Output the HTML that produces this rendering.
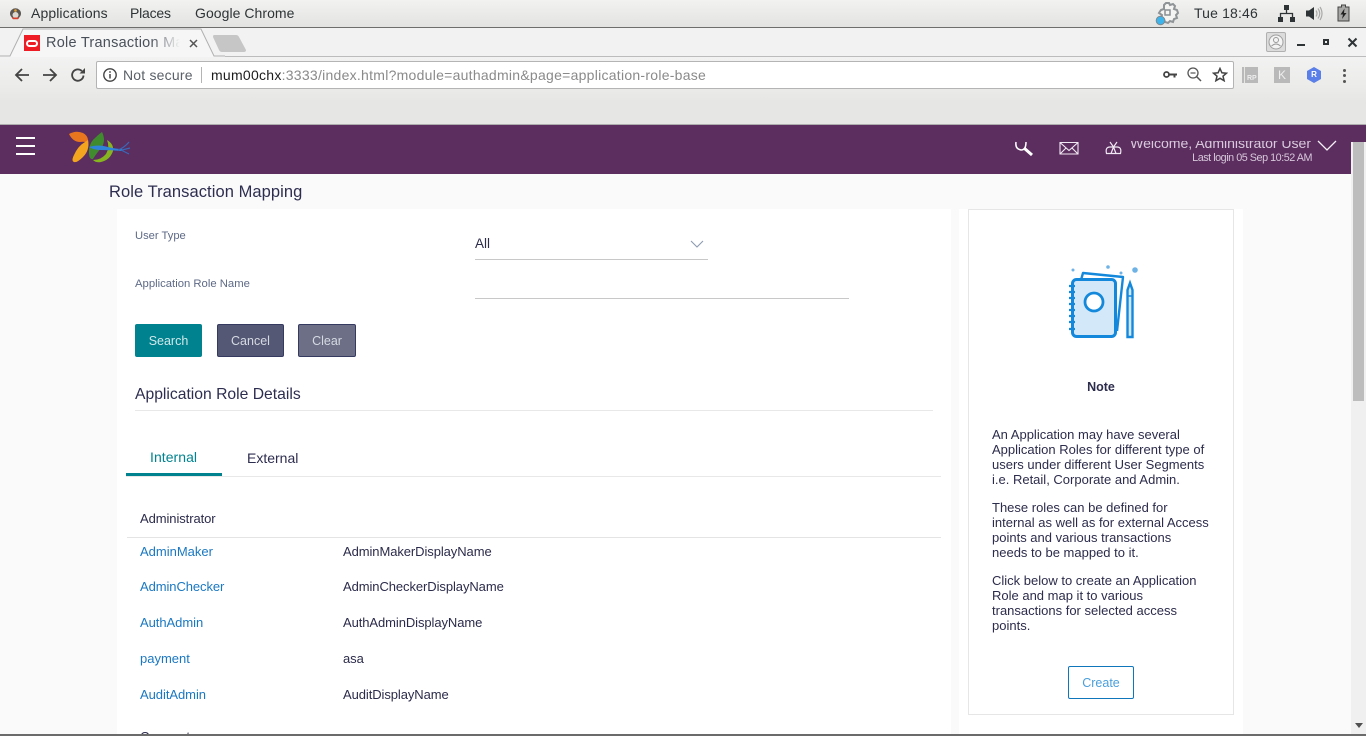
<!DOCTYPE html>
<html><head><meta charset="utf-8"><title>Role Transaction Mapping</title>
<style>
html,body{margin:0;padding:0;width:1366px;height:736px;overflow:hidden;background:#fafafa;font-family:"Liberation Sans",sans-serif;}
#root{position:relative;width:1366px;height:736px;overflow:hidden;background:#fafafa}
.a{position:absolute}
.t{position:absolute;white-space:nowrap;line-height:16px}
.k{color:#2b2b4b;font-size:13px;letter-spacing:-.08px}
.l{color:#1a78c2;font-size:13px}
.n{color:#2c2c4c;font-size:13px;left:992px}
.b{position:absolute;top:324px;height:33px;box-sizing:border-box;border-radius:2px;color:#d5d9e2;font-size:12.5px;line-height:33px;text-align:center}
</style></head><body><div id="root">

<!-- GNOME top bar -->
<div class="a" style="left:0;top:0;width:1366px;height:27px;background:linear-gradient(#f2f2f0,#e3e3e1);border-bottom:1px solid #6e6e6c;box-sizing:content-box"></div>
<svg class="a" style="left:8px;top:5px" width="15" height="16" viewBox="0 0 15 16"><ellipse cx="7.500" cy="8.500" rx="5.500" ry="5.200" fill="#5a5654"/><ellipse cx="7.500" cy="10" rx="3" ry="3" fill="#dcd8d0"/><path d="M3.500 12.500h8l-1.500 1.700h-5z" fill="#d8402e"/><circle cx="7.500" cy="5.500" r="1.300" fill="#e0a030"/></svg>
<div class="t" style="left:31px;top:5px;font-size:14px;color:#2e3436;letter-spacing:.1px">Applications</div>
<div class="t" style="left:130px;top:5px;font-size:14px;color:#2e3436;letter-spacing:-.2px">Places</div>
<div class="t" style="left:195px;top:5px;font-size:14px;color:#2e3436;letter-spacing:.05px">Google Chrome</div>
<svg class="a" style="left:1154px;top:1px" width="26" height="25" viewBox="0 0 26 25"><path d="M10 4l2-2h3l1 2 3-1 2 2-1 3 3 1 1 3-2 2 1 3-3 1-1 3-3-1-2 2-3-1-1-3-3-1 1-3-3-2 2-3 3-1 0-3z" fill="#f4f4f2" stroke="#8f9497" stroke-width="2"/><rect x="11" y="9" width="5" height="5" fill="none" stroke="#8a8f92" stroke-width="1.500"/><circle cx="6.500" cy="19.500" r="4.300" fill="#3db5ec" stroke="#7c8a92"/></svg>
<div class="t" style="left:1194px;top:5px;font-size:14px;color:#2e3436;letter-spacing:.15px">Tue 18:46</div>
<svg class="a" style="left:1278px;top:5px" width="17" height="17" viewBox="0 0 17 17"><path d="M6 0h5v5H6zM0 12h5v5H0zM12 12h5v5h-5z" fill="#2e3436"/><path d="M8.500 5v3.500M2.500 12V8.500h12V12" fill="none" stroke="#2e3436" stroke-width="1.300"/></svg>
<svg class="a" style="left:1306px;top:5px" width="17" height="17" viewBox="0 0 17 17"><path d="M0 5.500h3L8 2v13l-5-3.500H0z" fill="#2e3436"/><path d="M10 5.500q2 3 0 6M12 3.500q3.500 5 0 10M14 2q4 6.500 0 13" fill="none" stroke="#a9a9a9" stroke-width="1.200"/></svg>
<svg class="a" style="left:1337px;top:4px" width="13" height="18" viewBox="0 0 13 18"><path d="M4.500 1h4v2h3.500v14H1V3h3.500z" fill="#a7a7a5" stroke="#444" stroke-width="1"/><path d="M7.500 4.500L3.500 10.500h2.500L5 15l4.500-6H7z" fill="#222"/></svg>

<!-- Chrome tab strip -->
<div class="a" style="left:0;top:28px;width:1366px;height:28px;background:#f2f2f2;border-bottom:1px solid #bcbcbc;box-sizing:content-box"></div>
<svg class="a" style="left:0;top:28px" width="225" height="30" viewBox="0 0 225 30"><path d="M10 28L23 1h178l13 27h11v2H0v-2z" fill="#f6f6f6"/><path d="M0 28H10L23 1h178l13 27h11" fill="none" stroke="#b0b0b0" stroke-width="1"/></svg>
<svg class="a" style="left:212px;top:34px" width="36" height="19" viewBox="0 0 36 19"><path d="M2 1h22q2 0 3 2l7 13q0 2-2 2H10q-2 0-3-2L1 3q0-2 1-2z" fill="#c6c6c6"/></svg>
<div class="a" style="left:24px;top:35px;width:16px;height:16px;background:#ee1c25"></div>
<div class="a" style="left:26px;top:39.500px;width:12px;height:7px;box-sizing:border-box;border:2px solid #fff;border-radius:4px"></div>
<div class="a" style="left:46px;top:35px;width:134px;height:17px;overflow:hidden"><div class="t" style="left:0;top:0;font-size:14.500px;line-height:17px;color:#49505a;letter-spacing:.25px;-webkit-mask-image:linear-gradient(90deg,#000 78%,transparent 100%);mask-image:linear-gradient(90deg,#000 78%,transparent 100%);width:134px;overflow:hidden">Role Transaction Mapping</div></div>
<svg class="a" style="left:189px;top:39px" width="9" height="9" viewBox="0 0 9 9"><path d="M1 1l7 7M8 1L1 8" stroke="#555" stroke-width="1.500"/></svg>
<!-- window controls -->
<div class="a" style="left:1266px;top:32px;width:20px;height:20px;box-sizing:border-box;background:#dcdcdc;border:1px solid #b0b0b0;border-radius:2px"></div>
<svg class="a" style="left:1268px;top:34px" width="16" height="16" viewBox="0 0 16 16"><circle cx="8" cy="8" r="7" fill="#f4f4f4" stroke="#a0a0a0"/><circle cx="8" cy="6" r="2.500" fill="none" stroke="#999"/><path d="M3.500 12q4.500-4 9 0" fill="none" stroke="#999"/></svg>
<div class="a" style="left:1297px;top:44px;width:8px;height:2px;background:#2e3436"></div>
<div class="a" style="left:1323px;top:39px;width:6px;height:6px;box-sizing:border-box;border:2px solid #2e3436"></div>
<svg class="a" style="left:1347px;top:37px" width="11" height="11" viewBox="0 0 11 11"><path d="M1.500 1.500l8 8M9.500 1.500l-8 8" stroke="#2e3436" stroke-width="2"/></svg>

<!-- Toolbar -->
<div class="a" style="left:0;top:57px;width:1366px;height:68px;background:linear-gradient(#f2f2f2 0,#ebebe9 30px,#e6e6e4 45px);border-bottom:1px solid #adadad;box-sizing:border-box"></div>
<svg class="a" style="left:14px;top:67px" width="16" height="16" viewBox="0 0 16 16"><path d="M15 8H2M8 2L2 8l6 6" fill="none" stroke="#444" stroke-width="1.800"/></svg>
<svg class="a" style="left:42px;top:67px" width="16" height="16" viewBox="0 0 16 16"><path d="M1 8h13M8 2l6 6-6 6" fill="none" stroke="#444" stroke-width="1.800"/></svg>
<svg class="a" style="left:70px;top:67px" width="16" height="16" viewBox="0 0 16 16"><path d="M13.500 8.500A5.700 5.700 0 1 1 11.800 4" fill="none" stroke="#444" stroke-width="1.800"/><path d="M9.500 6.500H15V1z" fill="#444"/></svg>
<div class="a" style="left:96px;top:61px;width:1138px;height:28px;box-sizing:border-box;background:#fff;border:1px solid #b4b4b4;border-radius:2px"></div>
<svg class="a" style="left:103px;top:68px" width="14" height="14" viewBox="0 0 14 14"><circle cx="7" cy="7" r="6.200" fill="none" stroke="#444" stroke-width="1.400"/><path d="M7 6v4.500" stroke="#444" stroke-width="1.500"/><path d="M7 3.200v1.600" stroke="#444" stroke-width="1.500"/></svg>
<div class="t" style="left:123px;top:67px;font-size:14px;color:#5a6068;letter-spacing:.2px">Not secure</div>
<div class="a" style="left:201px;top:67px;width:1px;height:16px;background:#b4b4b4"></div>
<div class="t" style="left:211px;top:67px;font-size:14px;color:#8a8a8a;letter-spacing:.265px"><span style="color:#1c1c1c">mum00chx</span>:3333/index.html?module=authadmin&amp;page=application-role-base</div>
<svg class="a" style="left:1163px;top:70px" width="14" height="9" viewBox="0 0 14 9"><circle cx="3.500" cy="4.500" r="2.500" fill="none" stroke="#444" stroke-width="1.800"/><path d="M6 3.500h8v2h-1.500v2h-2v-2H6z" fill="#444"/></svg>
<svg class="a" style="left:1187px;top:67px" width="15" height="15" viewBox="0 0 15 15"><circle cx="6" cy="6" r="5" fill="none" stroke="#555" stroke-width="1.300"/><path d="M9.500 9.500L14 14" stroke="#555" stroke-width="1.500"/><path d="M3.500 6h5" stroke="#555" stroke-width="1.200"/></svg>
<svg class="a" style="left:1212px;top:67px" width="16" height="15" viewBox="0 0 16 15"><path d="M8 1.500l1.900 4.300 4.600.400-3.500 3 1.100 4.500L8 11.300l-4.100 2.400L5 9.200l-3.500-3 4.600-.4z" fill="none" stroke="#444" stroke-width="1.500"/></svg>
<div class="a" style="left:1242px;top:67px;width:16px;height:16px;background:#b9b9b9"></div>
<div class="a" style="left:1244px;top:67px;width:1px;height:16px;background:#e6e6e4"></div>
<div class="t" style="left:1247px;top:75px;font-size:7px;line-height:8px;font-weight:bold;color:#eee">RP</div>
<div class="a" style="left:1274px;top:67px;width:16px;height:16px;background:#b9b9b9;color:#eee;font-size:12px;line-height:16px;text-align:center">K</div>
<svg class="a" style="left:1306px;top:67px" width="16" height="16" viewBox="0 0 16 16"><path d="M8 0l7 4v8l-7 4-7-4V4z" fill="#5b7fe8"/></svg>
<div class="t" style="left:1306px;top:67px;width:16px;text-align:center;font-size:8px;font-weight:bold;color:#fff">R</div>
<div class="a" style="left:1343px;top:69px;width:3px;height:3px;background:#555;border-radius:2px"></div>
<div class="a" style="left:1343px;top:74px;width:3px;height:3px;background:#555;border-radius:2px"></div>
<div class="a" style="left:1343px;top:80px;width:3px;height:3px;background:#555;border-radius:2px"></div>

<!-- App header -->
<div class="a" style="left:0;top:125px;width:1351px;height:49px;background:#5c2d5f"></div>
<div class="a" style="left:1351px;top:125px;width:15px;height:17px;background:#5c2d5f"></div>
<div class="a" style="left:16px;top:137px;width:19px;height:2px;background:#fff"></div>
<div class="a" style="left:16px;top:145px;width:19px;height:2px;background:#fff"></div>
<div class="a" style="left:16px;top:153px;width:19px;height:2px;background:#fff"></div>
<svg class="a" style="left:68px;top:130px" width="64" height="34" viewBox="0 0 64 34">
<path d="M1 4Q8 0 15 3Q21 6 20 14Q18 11 12 12Q5 12 1 4z" fill="#e8761f"/>
<path d="M20 10Q22 20 15 27Q9 33 6 32Q3 31 6 25Q10 16 17 12z" fill="#f4a51f"/>
<path d="M34 2Q38 10 34 17Q28 24 25 29Q21 30 21 22Q21 13 27 8Q31 4 34 2z" fill="#3f8b2e"/>
<path d="M39 10Q46 14 45 21Q42 30 33 32Q28 33 25 30Q33 30 38 24Q42 17 39 10z" fill="#86b51f"/>
<path d="M21 17Q30 14 40 17Q48 19 54 19L54 21Q42 20 33 20Q26 20 21 17z" fill="#2f83d8"/>
<path d="M50 20Q56 18 61 12M53 20l8 4M54 20l8-2" stroke="#3968b8" stroke-width="1.200" fill="none"/>
</svg>
<svg class="a" style="left:1014px;top:140px" width="20" height="17" viewBox="0 0 20 17"><path d="M2 2Q1 9 7 10Q12 10 12 2" fill="none" stroke="#fff" stroke-width="1.500"/><path d="M10 8l8 7" stroke="#fff" stroke-width="3"/></svg>
<svg class="a" style="left:1059px;top:141px" width="20" height="14" viewBox="0 0 20 14"><path d="M1 1.500h18v11.500H1zM1 1.500l9 8 9-8M1 13l6-6M19 13l-6-6" fill="none" stroke="#f0e8f2" stroke-width="1.100"/></svg>
<svg class="a" style="left:1105px;top:141px" width="17" height="14" viewBox="0 0 17 14"><path d="M1.500 12.500Q0 6 5 6h7q5 0 3.500 6.500zM5 1l3.500 5L12 1M8.500 6L6 12.500M8.500 6L11 12.500" fill="none" stroke="#f0e8f2" stroke-width="1.200"/></svg>
<div class="a" style="left:1120px;top:141px;width:200px;height:10px;overflow:hidden">
<div class="t" style="left:0;top:-6px;font-size:14.100px;color:#d8cadc;width:191px;text-align:right;letter-spacing:-.05px">Welcome, Administrator User</div>
</div>
<div class="t" style="left:1120px;top:151px;font-size:10.800px;line-height:14px;color:#d6c8da;width:192px;text-align:right;letter-spacing:-.47px">Last login 05 Sep 10:52 AM</div>
<svg class="a" style="left:1317px;top:140px" width="20" height="12" viewBox="0 0 20 12"><path d="M1 1l9 9 9-9" fill="none" stroke="#f4f0f6" stroke-width="1.300"/></svg>

<!-- Scrollbar -->
<div class="a" style="left:1351px;top:142px;width:15px;height:594px;background:#f0f0f0"></div>
<div class="a" style="left:1353px;top:142px;width:11px;height:259px;background:#bdbdbd"></div>
<svg class="a" style="left:1354px;top:723px" width="10" height="6" viewBox="0 0 10 6"><path d="M1 0h8L5 5z" fill="#505050"/></svg>

<!-- Page content -->
<div class="t" style="left:109px;top:182px;font-size:16.500px;line-height:20px;color:#2d2d50;letter-spacing:.07px">Role Transaction Mapping</div>
<div class="a" style="left:117px;top:209px;width:834px;height:527px;background:#fff"></div>
<div class="a" style="left:959px;top:209px;width:284px;height:527px;background:#fff"></div>

<div class="t" style="left:135px;top:228px;font-size:11.200px;color:#5e6a86">User Type</div>
<div class="t" style="left:135px;top:276px;font-size:11.300px;color:#5e6a86">Application Role Name</div>
<div class="t" style="left:475px;top:236px;font-size:13.500px;color:#2b2b4b">All</div>
<div class="a" style="left:475px;top:259px;width:233px;height:1px;background:#c8c8c8"></div>
<svg class="a" style="left:690px;top:240px" width="14" height="8" viewBox="0 0 14 8"><path d="M1 1l6 6 6-6" fill="none" stroke="#8d9ab0" stroke-width="1.100"/></svg>
<div class="a" style="left:475px;top:298px;width:374px;height:1px;background:#c8c8c8"></div>

<div class="b" style="left:135px;width:67px;background:#00838f;border:1px solid #00838f;color:#cfe8ea">Search</div>
<div class="b" style="left:217px;width:67px;background:#555874;border:1px solid #353a60">Cancel</div>
<div class="b" style="left:298px;width:58px;background:#6c6f85;border:1px solid #353a60">Clear</div>

<div class="t" style="left:135px;top:385px;font-size:15.700px;line-height:20px;color:#2d2d50">Application Role Details</div>
<div class="a" style="left:135px;top:410px;width:798px;height:1px;background:#e8e8e8"></div>

<div class="t" style="left:150px;top:449px;font-size:14px;color:#00838f;letter-spacing:.05px">Internal</div>
<div class="t" style="left:247px;top:450px;font-size:14px;color:#2d2d50">External</div>
<div class="a" style="left:126px;top:476px;width:815px;height:1px;background:#e8e8e8"></div>
<div class="a" style="left:126px;top:473px;width:96px;height:3px;background:#00838f"></div>

<div class="t k" style="left:140px;top:511px">Administrator</div>
<div class="a" style="left:127px;top:537px;width:814px;height:1px;background:#e4e4e4"></div>

<div class="t l" style="left:140px;top:544px">AdminMaker</div>
<div class="t k" style="left:343px;top:544px">AdminMakerDisplayName</div>
<div class="t l" style="left:140px;top:579px;letter-spacing:-.08px">AdminChecker</div>
<div class="t k" style="left:343px;top:579px">AdminCheckerDisplayName</div>
<div class="t l" style="left:140px;top:615px;letter-spacing:-.05px">AuthAdmin</div>
<div class="t k" style="left:343px;top:615px">AuthAdminDisplayName</div>
<div class="t l" style="left:140px;top:651px">payment</div>
<div class="t k" style="left:343px;top:651px">asa</div>
<div class="t l" style="left:140px;top:687px;letter-spacing:-.05px">AuditAdmin</div>
<div class="t k" style="left:343px;top:687px">AuditDisplayName</div>
<div class="t k" style="left:140px;top:729px">Corporate</div>

<!-- Note card -->
<div class="a" style="left:968px;top:209px;width:266px;height:506px;box-sizing:border-box;border:1px solid #e6e6e6;background:#fff"></div>
<svg class="a" style="left:1060px;top:260px" width="85" height="85" viewBox="0 0 85 85">
<circle cx="13" cy="10" r="1.500" fill="#6fb2e6"/><circle cx="48" cy="7" r="1.800" fill="#6fb2e6"/><circle cx="61" cy="13" r="1.500" fill="#6fb2e6"/><circle cx="75" cy="10" r="2.800" fill="#6fb2e6"/>
<path d="M21 20l2-7 40 4-6 54" fill="#fff" stroke="#1489dc" stroke-width="2.400" stroke-linejoin="round"/>
<rect x="12.500" y="19.500" width="43" height="57" rx="4" fill="#d3e8f8" stroke="#1489dc" stroke-width="3"/>
<path d="M9 26h6M9 32h6M9 38h6M9 44h6M9 50h6M9 56h6M9 62h6M9 69h6" stroke="#1489dc" stroke-width="2.200"/>
<circle cx="34" cy="42" r="9" fill="#fff" stroke="#1489dc" stroke-width="2.800"/>
<path d="M67.500 30L70 23l2.500 7v47h-5z" fill="#d3e8f8" stroke="#1489dc" stroke-width="2.400"/>
<path d="M67.500 36h5" stroke="#1489dc" stroke-width="1.500"/>
</svg>
<div class="t" style="left:968px;top:379px;width:266px;text-align:center;font-size:12.500px;font-weight:bold;color:#2c2c4c">Note</div>
<div class="t n" style="top:427px;line-height:15px">An Application may have several<br>Application Roles for different type of<br>users under different User Segments<br>i.e. Retail, Corporate and Admin.</div>
<div class="t n" style="top:500px;line-height:15px">These roles can be defined for<br>internal as well as for external Access<br>points and various transactions<br>needs to be mapped to it.</div>
<div class="t n" style="top:573px;line-height:15px">Click below to create an Application<br>Role and map it to various<br>transactions for selected access<br>points.</div>
<div class="a" style="left:1068px;top:666px;width:66px;height:33px;box-sizing:border-box;border:1px solid #0f76bc;border-radius:2px;color:#4a9fdc;font-size:12.500px;line-height:33px;text-align:center">Create</div>

<!-- bottom window edge -->
<div class="a" style="left:0;top:734px;width:1366px;height:2px;background:#6b6b6b"></div>
</div></body></html>
